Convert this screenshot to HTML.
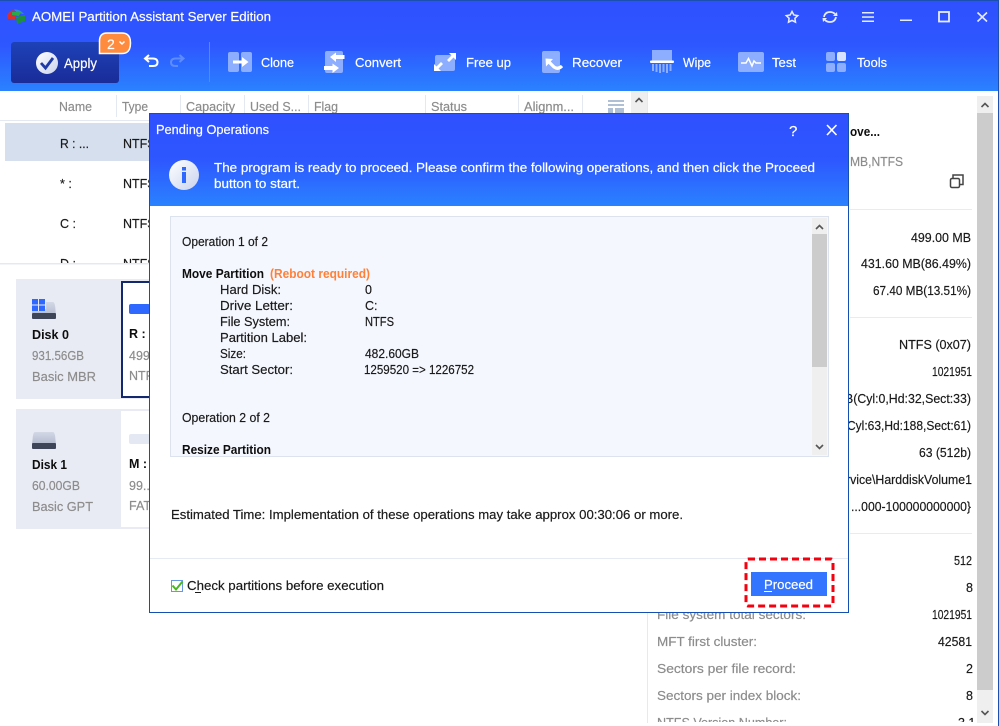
<!DOCTYPE html>
<html><head><meta charset="utf-8"><title>AOMEI Partition Assistant Server Edition</title>
<style>
html,body{margin:0;padding:0;width:999px;height:726px;overflow:hidden;background:#fff}
svg{display:block;position:absolute;left:0;top:0}
text{font-family:"Liberation Sans",sans-serif;font-size:12.5px;fill:#1a1a1a;stroke:#1a1a1a;stroke-width:.18px;white-space:pre}
.w{fill:#fff;stroke:#fff}.g{fill:#8c8c8c;stroke:#8c8c8c}.b{font-weight:bold;fill:#0d0d0d;stroke:none}.o{fill:#ff8038;stroke:none;font-weight:bold}
</style></head><body>
<svg width="999" height="726" viewBox="0 0 999 726" xmlns="http://www.w3.org/2000/svg">
<defs>
<linearGradient id="hd" x1="0" y1="0" x2="0" y2="1"><stop offset="0" stop-color="#2f50ff"/><stop offset=".5" stop-color="#2e57ff"/><stop offset="1" stop-color="#2a82ff"/></linearGradient>
<linearGradient id="ap" x1="0" y1="0" x2="0" y2="1"><stop offset="0" stop-color="#1d42b8"/><stop offset="1" stop-color="#1a2c98"/></linearGradient>
<linearGradient id="ci" x1="0" y1="0" x2="1" y2="1"><stop offset="0" stop-color="#ffffff"/><stop offset="1" stop-color="#c9d3ee"/></linearGradient>
<linearGradient id="dk" x1="0" y1="0" x2="0" y2="1"><stop offset="0" stop-color="#d3d8e6"/><stop offset="1" stop-color="#b4bbd0"/></linearGradient>
<clipPath id="cl1"><rect x="0" y="120" width="150" height="143"/></clipPath>
<clipPath id="cl2"><rect x="170" y="217" width="642" height="239"/></clipPath>
<clipPath id="cl3"><rect x="648" y="92" width="330" height="630"/></clipPath>
</defs>

<!-- header -->
<rect x="0" y="0" width="999" height="91" fill="url(#hd)"/>
<rect x="0" y="0" width="999" height="1" fill="#1c50b0"/>
<rect x="998" y="0" width="1" height="726" fill="#1c50b0"/>

<!-- logo -->
<path d="M7 16 Q8 11 14 10 L16 13 L15 20 L8 19Z" fill="#d8302f"/>
<path d="M14 9.500 Q20 9 24 14 L17 13Z" fill="#2e8fd8"/>
<path d="M12 12 L21 12 L19 16 L12 15Z" fill="#2ba84a"/>
<path d="M16 17 L25 15 L25 21 L17 24Z" fill="#1f8f3f"/>
<text class="w" x="32" y="21" style="font-size:13px" textLength="239" lengthAdjust="spacingAndGlyphs">AOMEI Partition Assistant Server Edition</text>

<!-- apply -->
<rect x="11" y="42" width="108" height="41" rx="3" fill="url(#ap)"/>
<circle cx="47" cy="63" r="11" fill="url(#ci)"/>
<path d="M41 63 L45.500 68 L53 58" fill="none" stroke="#1d3aa8" stroke-width="2.800"/>
<text class="w" x="64" y="68" textLength="33" lengthAdjust="spacingAndGlyphs" style="font-size:13.500px">Apply</text>
<path d="M99.500 53.500 V41 Q99.500 33 107 33 H122 Q130.500 33 130.500 43 Q130.500 53.500 122 53.500Z" fill="#ff8b3f" stroke="#fff" stroke-width="1.500"/>
<text class="w" x="107" y="49" style="font-size:14px">2</text>
<path d="M119.500 41.500 L122 44 L124.500 41.500" fill="none" stroke="#fff" stroke-width="1.500"/>

<!-- undo/redo -->
<path d="M149 55 L145 58.500 L149 62 M145 58.500 H153 Q157.500 58.500 157.500 62.500 Q157.500 66 153 66 H149" fill="none" stroke="#fff" stroke-width="2"/>
<path d="M179.500 55 L183.500 58.500 L179.500 62 M183.500 58.500 H175.500 Q171 58.500 171 62.500 Q171 66 175.500 66 H178" fill="none" stroke="#5d8cff" stroke-width="2"/>
<rect x="209" y="42" width="1" height="40" fill="#5585ff"/>

<!-- clone -->
<rect x="228" y="52" width="11" height="20" rx="2" fill="#8daeff"/>
<rect x="241" y="52" width="11" height="20" rx="2" fill="#8daeff"/>
<path d="M233 60.500 H242 V57 L248.500 62 L242 67 V63.500 H233Z" fill="#fff"/>
<text class="w" x="261" y="67" textLength="33" lengthAdjust="spacingAndGlyphs">Clone</text>

<!-- convert -->
<rect x="325" y="51" width="18" height="22" rx="2" fill="#8daeff"/>
<path d="M344.500 55 V59 H336 V62 L330 57 L336 52.500 V55Z" fill="#fff"/>
<path d="M324 66 V70 H332.500 V73 L339 68 L332.500 63.500 V66Z" fill="#fff"/>
<text class="w" x="355" y="67" textLength="46" lengthAdjust="spacingAndGlyphs">Convert</text>

<!-- free up -->
<rect x="435" y="55" width="20" height="16" rx="2" fill="#8daeff"/>
<path d="M449 53 H456 V60 L453.500 57.500 L449 62 L447 60 L451.500 55.500Z" fill="#fff"/>
<path d="M441 71 H434 V64 L436.500 66.500 L441 62 L443 64 L438.500 68.500Z" fill="#fff"/>
<text class="w" x="466" y="67" textLength="45" lengthAdjust="spacingAndGlyphs">Free up</text>

<!-- recover -->
<rect x="542" y="51" width="18" height="22" rx="2" fill="#8daeff"/>
<path d="M545.500 58.500 L553 59 L546 66.500Z" fill="#fff"/>
<path d="M548.500 61.500 L554 67 Q558 70 562 66" fill="none" stroke="#fff" stroke-width="3.200"/>
<text class="w" x="572" y="67" textLength="50" lengthAdjust="spacingAndGlyphs">Recover</text>

<!-- wipe -->
<path d="M652 50 H672 V61 H652Z" fill="#8daeff"/>
<rect x="650" y="60.500" width="24" height="2.500" rx="1" fill="#fff"/>
<g fill="#8daeff"><rect x="652" y="64" width="2" height="7"/><rect x="655.500" y="64" width="2" height="8"/><rect x="659" y="64" width="2" height="9"/><rect x="662.500" y="64" width="2" height="8"/><rect x="666" y="64" width="2" height="9"/><rect x="669.500" y="64" width="2" height="7"/></g>
<text class="w" x="683" y="67" textLength="28" lengthAdjust="spacingAndGlyphs">Wipe</text>

<!-- test -->
<rect x="738" y="52" width="26" height="20" rx="2" fill="#8daeff"/>
<path d="M741 63 H746 L748.500 58.500 L752 66 L754 61 L756 63 H761" fill="none" stroke="#fff" stroke-width="1.500"/>
<text class="w" x="772" y="67" textLength="24" lengthAdjust="spacingAndGlyphs">Test</text>

<!-- tools -->
<rect x="826" y="52" width="9" height="9" rx="2" fill="#8daeff"/>
<rect x="837" y="52" width="9" height="9" rx="2" fill="#d8e3ff"/>
<rect x="826" y="63" width="9" height="9" rx="2" fill="#8daeff"/>
<rect x="837" y="63" width="9" height="9" rx="2" fill="#8daeff"/>
<text class="w" x="857" y="67" textLength="30" lengthAdjust="spacingAndGlyphs">Tools</text>

<!-- window controls -->
<path d="M792 11.500 L793.800 15 L797.700 15.600 L794.900 18.300 L795.500 22.200 L792 20.400 L788.500 22.200 L789.100 18.300 L786.300 15.600 L790.200 15Z" fill="none" stroke="#e6ecff" stroke-width="1.500"/>
<path d="M824 17 Q825 12 830 12 Q833 12 835 14 M836 17 Q835 22 830 22 Q827 22 825 20" fill="none" stroke="#e6ecff" stroke-width="1.800"/>
<path d="M833 16 L837.500 16 L837 12Z M827 18 L822.500 18 L823 22Z" fill="#e6ecff"/>
<rect x="862" y="12" width="12" height="1.500" fill="#e6ecff"/><rect x="862" y="16.300" width="12" height="1.500" fill="#e6ecff"/><rect x="862" y="20.500" width="12" height="1.500" fill="#e6ecff"/>
<rect x="900" y="19.500" width="12" height="1.500" fill="#e6ecff"/>
<rect x="939" y="12" width="10" height="9.500" fill="none" stroke="#e6ecff" stroke-width="1.800"/>
<path d="M977.500 12.500 L987 21.500 M987 12.500 L977.500 21.500" stroke="#e6ecff" stroke-width="1.600"/>

<!-- column header -->
<g fill="#e4e8f0"><rect x="116" y="95" width="1" height="22"/><rect x="180" y="95" width="1" height="22"/><rect x="244" y="95" width="1" height="22"/><rect x="308" y="95" width="1" height="22"/><rect x="425" y="95" width="1" height="22"/><rect x="518" y="95" width="1" height="22"/><rect x="582" y="95" width="1" height="22"/></g>
<text class="g" x="59" y="111" textLength="33" lengthAdjust="spacingAndGlyphs">Name</text>
<text class="g" x="122" y="111" textLength="26" lengthAdjust="spacingAndGlyphs">Type</text>
<text class="g" x="186" y="111" textLength="49" lengthAdjust="spacingAndGlyphs">Capacity</text>
<text class="g" x="250" y="111" textLength="51" lengthAdjust="spacingAndGlyphs">Used S...</text>
<text class="g" x="314" y="111" textLength="24" lengthAdjust="spacingAndGlyphs">Flag</text>
<text class="g" x="431" y="111" textLength="36" lengthAdjust="spacingAndGlyphs">Status</text>
<text class="g" x="524" y="111" textLength="50" lengthAdjust="spacingAndGlyphs">Alignm...</text>
<rect x="608" y="100" width="16" height="2" fill="#b0bfd4"/><rect x="608" y="104" width="16" height="2" fill="#b0bfd4"/><rect x="608" y="108" width="5" height="8" fill="#b0bfd4"/><rect x="615" y="108" width="9" height="8" fill="#b0bfd4"/>
<rect x="631" y="91" width="16" height="28" fill="#efefef"/>
<path d="M635.500 102 L639 98.500 L642.500 102" fill="none" stroke="#555" stroke-width="1.600"/>
<rect x="0" y="120" width="150" height="1" fill="#e4e8f0"/>

<!-- rows -->
<rect x="5" y="123" width="145" height="38" fill="#d5dfee"/>
<g clip-path="url(#cl1)">
<text x="60" y="148" textLength="29" lengthAdjust="spacingAndGlyphs">R : ...</text><text x="123" y="148">NTFS</text>
<text x="60" y="188">* :</text><text x="123" y="188">NTFS</text>
<text x="60" y="228">C :</text><text x="123" y="228">NTFS</text>
<text x="60" y="268">D :</text><text x="123" y="268">NTFS</text>
</g>
<rect x="0" y="263" width="150" height="1.500" fill="#e4e8f0"/>

<!-- disk 0 -->
<rect x="16" y="279" width="134" height="120" fill="#e8ebf3"/>
<rect x="122" y="282" width="30" height="115" fill="#fff" stroke="#14286e" stroke-width="2"/>
<path d="M46 302 H53 Q55 302 55.500 310 L56 316 H46Z" fill="url(#dk)"/>
<path d="M32 313 H46 V309 H32Z" fill="url(#dk)"/>
<rect x="32" y="313" width="24" height="6" rx="1" fill="#3e4558"/>
<rect x="32" y="299" width="13" height="12" fill="#2f68ff"/><rect x="38" y="299" width="1" height="12" fill="#e8ebf3"/><rect x="32" y="304.500" width="13" height="1" fill="#e8ebf3"/>
<text class="b" x="32" y="339" textLength="37" lengthAdjust="spacingAndGlyphs">Disk 0</text>
<text class="g" x="32" y="360" textLength="52" lengthAdjust="spacingAndGlyphs">931.56GB</text>
<text class="g" x="32" y="381" textLength="64" lengthAdjust="spacingAndGlyphs">Basic MBR</text>
<rect x="129" y="304" width="21" height="10" rx="2" fill="#2f68ff"/>
<text class="b" x="129" y="338">R :</text>
<text class="g" x="129" y="360">499</text>
<text class="g" x="129" y="380">NTFS</text>

<!-- disk 1 -->
<rect x="16" y="409" width="134" height="120" fill="#e8ebf3"/>
<rect x="121" y="411" width="29" height="116" fill="#fff"/>
<path d="M35 432 H53 Q55 432 55.500 440 L56 444 H32 L32.500 440 Q33 432 35 432Z" fill="url(#dk)"/>
<rect x="32" y="443" width="24" height="6" rx="1" fill="#3e4558"/>
<text class="b" x="32" y="469" textLength="35" lengthAdjust="spacingAndGlyphs">Disk 1</text>
<text class="g" x="32" y="490" textLength="48" lengthAdjust="spacingAndGlyphs">60.00GB</text>
<text class="g" x="32" y="511" textLength="61" lengthAdjust="spacingAndGlyphs">Basic GPT</text>
<rect x="129" y="434" width="21" height="10" rx="2" fill="#e4e8f2"/>
<text class="b" x="129" y="468">M :</text>
<text class="g" x="129" y="490">99...</text>
<text class="g" x="129" y="510">FAT</text>

<!-- right panel -->
<rect x="647" y="91" width="1" height="635" fill="#e4e9f2"/>
<rect x="977" y="96" width="16" height="17" fill="#efefef"/>
<path d="M981.500 107 L985 103.500 L988.500 107" fill="none" stroke="#555" stroke-width="1.600"/>
<rect x="977" y="113" width="16" height="577" fill="#cccccc"/>
<rect x="977" y="690" width="16" height="33" fill="#efefef"/>
<path d="M981.500 711 L985 714.500 L988.500 711" fill="none" stroke="#555" stroke-width="1.600"/>
<rect x="0" y="723" width="998" height="3" fill="#fff"/>
<g clip-path="url(#cl3)">
<text class="b" x="850" y="136" textLength="30" lengthAdjust="spacingAndGlyphs">ove...</text>
<text class="g" x="850" y="166" textLength="53" lengthAdjust="spacingAndGlyphs">MB,NTFS</text>
<rect x="950.500" y="178.500" width="9" height="9" rx="1.500" fill="#fff" stroke="#444" stroke-width="1.500"/>
<path d="M953 178 V175 H963 V184.500 H960" fill="none" stroke="#444" stroke-width="1.500"/>
<rect x="850" y="209" width="122" height="1" fill="#e8ebf3"/>
<text x="911" y="242" textLength="60" lengthAdjust="spacingAndGlyphs">499.00 MB</text>
<text x="861" y="268" textLength="110" lengthAdjust="spacingAndGlyphs">431.60 MB(86.49%)</text>
<text x="873" y="295" textLength="98" lengthAdjust="spacingAndGlyphs">67.40 MB(13.51%)</text>
<rect x="850" y="317" width="122" height="1" fill="#e8ebf3"/>
<text x="899" y="349" textLength="72" lengthAdjust="spacingAndGlyphs">NTFS (0x07)</text>
<text x="932" y="376" textLength="40" lengthAdjust="spacingAndGlyphs">1021951</text>
<text x="845" y="403" textLength="126" lengthAdjust="spacingAndGlyphs">B(Cyl:0,Hd:32,Sect:33)</text>
<text x="843" y="430" textLength="128" lengthAdjust="spacingAndGlyphs">(Cyl:63,Hd:188,Sect:61)</text>
<text x="919" y="457" textLength="52" lengthAdjust="spacingAndGlyphs">63 (512b)</text>
<text x="846" y="484" textLength="126" lengthAdjust="spacingAndGlyphs">rvice\HarddiskVolume1</text>
<text x="851" y="511" textLength="120" lengthAdjust="spacingAndGlyphs">...000-100000000000}</text>
<rect x="850" y="533" width="122" height="1" fill="#e8ebf3"/>
<text x="954" y="565" textLength="18" lengthAdjust="spacingAndGlyphs">512</text>
<text x="966" y="592">8</text>
<text class="g" x="657" y="619" textLength="149" lengthAdjust="spacingAndGlyphs">File system total sectors:</text>
<text x="932" y="619" textLength="40" lengthAdjust="spacingAndGlyphs">1021951</text>
<text class="g" x="657" y="646" textLength="100" lengthAdjust="spacingAndGlyphs">MFT first cluster:</text>
<text x="938" y="646" textLength="34" lengthAdjust="spacingAndGlyphs">42581</text>
<text class="g" x="657" y="673" textLength="139" lengthAdjust="spacingAndGlyphs">Sectors per file record:</text>
<text x="966" y="673">2</text>
<text class="g" x="657" y="700" textLength="144" lengthAdjust="spacingAndGlyphs">Sectors per index block:</text>
<text x="966" y="700">8</text>
<text class="g" x="657" y="727" textLength="130" lengthAdjust="spacingAndGlyphs">NTFS Version Number:</text>
<text x="958" y="727">3.1</text>
</g>

<!-- dialog -->
<rect x="149.500" y="113.500" width="699" height="499" fill="#fff" stroke="#1450b0"/>
<rect x="150" y="114" width="698" height="92" fill="url(#hd)"/>
<text class="w" x="156" y="134" textLength="113" lengthAdjust="spacingAndGlyphs">Pending Operations</text>
<text class="w" x="789" y="136" style="font-size:15px">?</text>
<path d="M827 125 L836.500 135 M836.500 125 L827 135" stroke="#fff" stroke-width="1.600"/>
<circle cx="184" cy="175" r="15" fill="url(#ci)"/>
<rect x="182" y="167" width="4" height="3.500" fill="#2f68ff"/><rect x="182" y="172" width="4" height="11" fill="#2f68ff"/>
<text class="w" x="214" y="172" textLength="601" lengthAdjust="spacingAndGlyphs">The program is ready to proceed. Please confirm the following operations, and then click the Proceed</text>
<text class="w" x="214" y="188" textLength="86" lengthAdjust="spacingAndGlyphs">button to start.</text>

<rect x="170.500" y="216.500" width="658" height="240" fill="#f4f7fe" stroke="#dde3ee"/>
<rect x="812" y="218" width="15" height="237" fill="#efefef"/>
<rect x="812" y="234" width="15" height="133" fill="#cccccc"/>
<path d="M816 229 L819.500 225.500 L823 229" fill="none" stroke="#555" stroke-width="1.600"/>
<path d="M816 445 L819.500 448.500 L823 445" fill="none" stroke="#555" stroke-width="1.600"/>
<g clip-path="url(#cl2)">
<text x="182" y="246" textLength="86" lengthAdjust="spacingAndGlyphs">Operation 1 of 2</text>
<text class="b" x="182" y="278" textLength="82" lengthAdjust="spacingAndGlyphs">Move Partition</text>
<text class="o" x="270" y="278" textLength="100" lengthAdjust="spacingAndGlyphs">(Reboot required)</text>
<text x="220" y="294" textLength="61" lengthAdjust="spacingAndGlyphs">Hard Disk:</text><text x="365" y="294">0</text>
<text x="220" y="310" textLength="73" lengthAdjust="spacingAndGlyphs">Drive Letter:</text><text x="365" y="310">C:</text>
<text x="220" y="326" textLength="70" lengthAdjust="spacingAndGlyphs">File System:</text><text x="365" y="326" textLength="29" lengthAdjust="spacingAndGlyphs">NTFS</text>
<text x="220" y="342" textLength="87" lengthAdjust="spacingAndGlyphs">Partition Label:</text>
<text x="220" y="358" textLength="26" lengthAdjust="spacingAndGlyphs">Size:</text><text x="365" y="358" textLength="54" lengthAdjust="spacingAndGlyphs">482.60GB</text>
<text x="220" y="374" textLength="73" lengthAdjust="spacingAndGlyphs">Start Sector:</text><text x="364" y="374" textLength="110" lengthAdjust="spacingAndGlyphs">1259520 =&gt; 1226752</text>
<text x="182" y="422" textLength="88" lengthAdjust="spacingAndGlyphs">Operation 2 of 2</text>
<text class="b" x="182" y="454" textLength="89" lengthAdjust="spacingAndGlyphs">Resize Partition</text>
</g>
<text x="171" y="519" textLength="512" lengthAdjust="spacingAndGlyphs">Estimated Time: Implementation of these operations may take approx 00:30:06 or more.</text>
<rect x="150" y="558" width="698" height="1" fill="#e6ebf3"/>
<rect x="171.500" y="580.500" width="11" height="11" fill="#fff" stroke="#6a98e0"/>
<path d="M172.500 585.500 L176 589.500 L182.500 581.500" fill="none" stroke="#49b81e" stroke-width="2"/>
<text x="187" y="590" textLength="197" lengthAdjust="spacingAndGlyphs">Check partitions before execution</text>
<rect x="195" y="592" width="6" height="1" fill="#1a1a1a"/>
<rect x="751" y="572" width="76" height="24" fill="#3375ff"/>
<text class="w" x="764" y="589" textLength="49" lengthAdjust="spacingAndGlyphs">Proceed</text>
<rect x="764" y="591" width="8" height="1" fill="#fff"/>
<rect x="746" y="559" width="87" height="47" rx="2" fill="none" stroke="#f5000e" stroke-width="3" stroke-dasharray="7 4"/>
</svg>
</body></html>
